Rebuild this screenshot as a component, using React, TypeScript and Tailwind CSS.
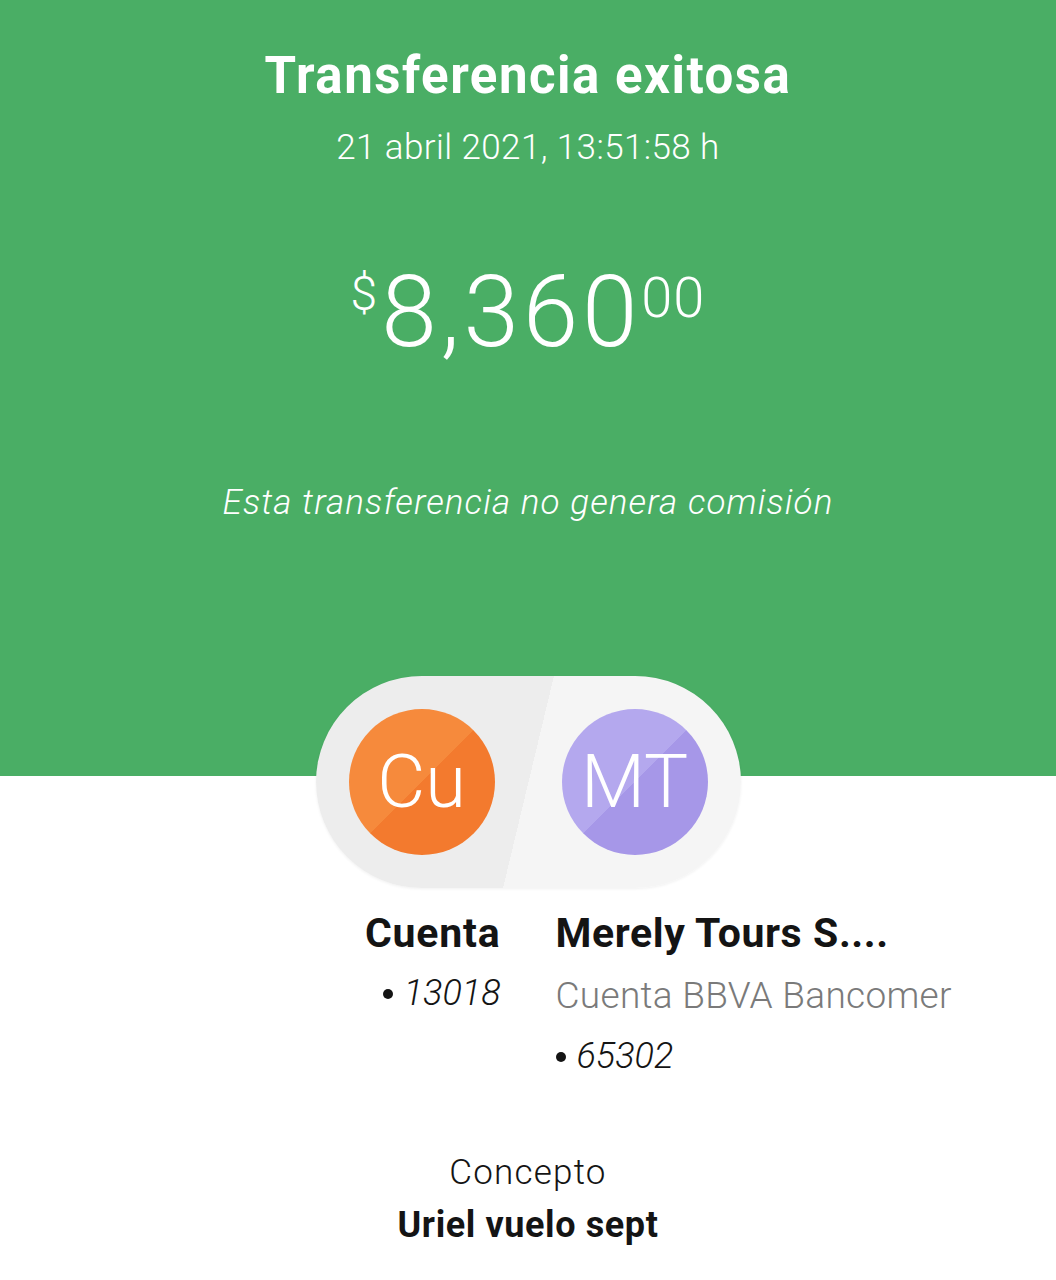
import React from 'react';

const font = { fontFamily: 'Roboto, "Liberation Sans", sans-serif' };

function Avatar({ initials, tone }: { initials: string; tone: 'orange' | 'purple' }) {
  const bg =
    tone === 'orange'
      ? 'bg-[linear-gradient(135deg,#f68a3c_50%,#f37a2e_50%)]'
      : 'bg-[linear-gradient(135deg,#b4a8ee_50%,#a697e8_50%)]';
  return (
    <div className={`w-[146px] h-[146px] rounded-full flex items-center justify-center ${bg}`}>
      <span className="text-white font-light text-[74px] leading-none">{initials}</span>
    </div>
  );
}

function Bullet() {
  return <span className="inline-block w-[10px] h-[10px] rounded-full bg-current mr-[11px] mt-[1px]" />;
}

export default function App() {
  return (
    <div className="w-[1056px] h-[1280px] bg-white overflow-hidden" style={font}>
      {/* Green header */}
      <div className="bg-[#4aae65] h-[776px] flex flex-col items-center text-white">
        <h1 className="mt-[47px] text-[51px] font-bold leading-[58px] tracking-[1.5px]">Transferencia exitosa</h1>
        <p className="mt-[23px] text-[35px] font-light leading-[40px] tracking-[0.4px]">21 abril 2021, 13:51:58 h</p>

        <div className="mt-[94px] flex items-start leading-none">
          <span className="text-[48px] font-light mt-[8px] mr-[4px]">$</span>
          <span className="text-[100px] font-light tracking-[3.8px]">8,360</span>
          <span className="text-[56px] font-light mt-[8px] tracking-[1px]">00</span>
        </div>

        <p className="mt-[121px] text-[35px] font-light italic leading-[40px] tracking-[1.1px]">Esta transferencia no genera comisión</p>
      </div>

      {/* Pill with avatars */}
      <div className="flex justify-center -mt-[100px]">
        <div className="w-[425px] h-[212px] rounded-full bg-[linear-gradient(103.5deg,#ededed_50%,#f5f5f5_50%)] shadow-[0_1px_3px_rgba(0,0,0,0.06)] flex items-center justify-between px-[33px]">
          <Avatar initials="Cu" tone="orange" />
          <Avatar initials="MT" tone="purple" />
        </div>
      </div>

      {/* Accounts */}
      <div className="grid grid-cols-2 gap-x-[55px] mt-[21px] text-[#141414]">
        <div className="flex flex-col items-end">
          <span className="text-[41px] font-bold leading-[48px] tracking-[0.8px]">Cuenta</span>
          <span className="mt-[16px] text-[36px] font-light italic leading-[40px] flex items-center">
            <Bullet />13018
          </span>
        </div>
        <div className="flex flex-col items-start">
          <span className="text-[41px] font-bold leading-[48px] tracking-[0.6px]">Merely Tours S....</span>
          <span className="mt-[19px] text-[37px] font-light leading-[40px] tracking-[0.3px] text-[#7a7a7a]">Cuenta BBVA Bancomer</span>
          <span className="mt-[20px] text-[36px] font-light italic leading-[40px] flex items-center">
            <Bullet />65302
          </span>
        </div>
      </div>

      {/* Concept */}
      <div className="flex flex-col items-center mt-[77px] text-[#141414]">
        <span className="text-[35px] font-light leading-[40px] tracking-[1.2px]">Concepto</span>
        <span className="mt-[12px] text-[36px] font-bold leading-[40px] tracking-[0.6px]">Uriel vuelo sept</span>
      </div>
    </div>
  );
}
